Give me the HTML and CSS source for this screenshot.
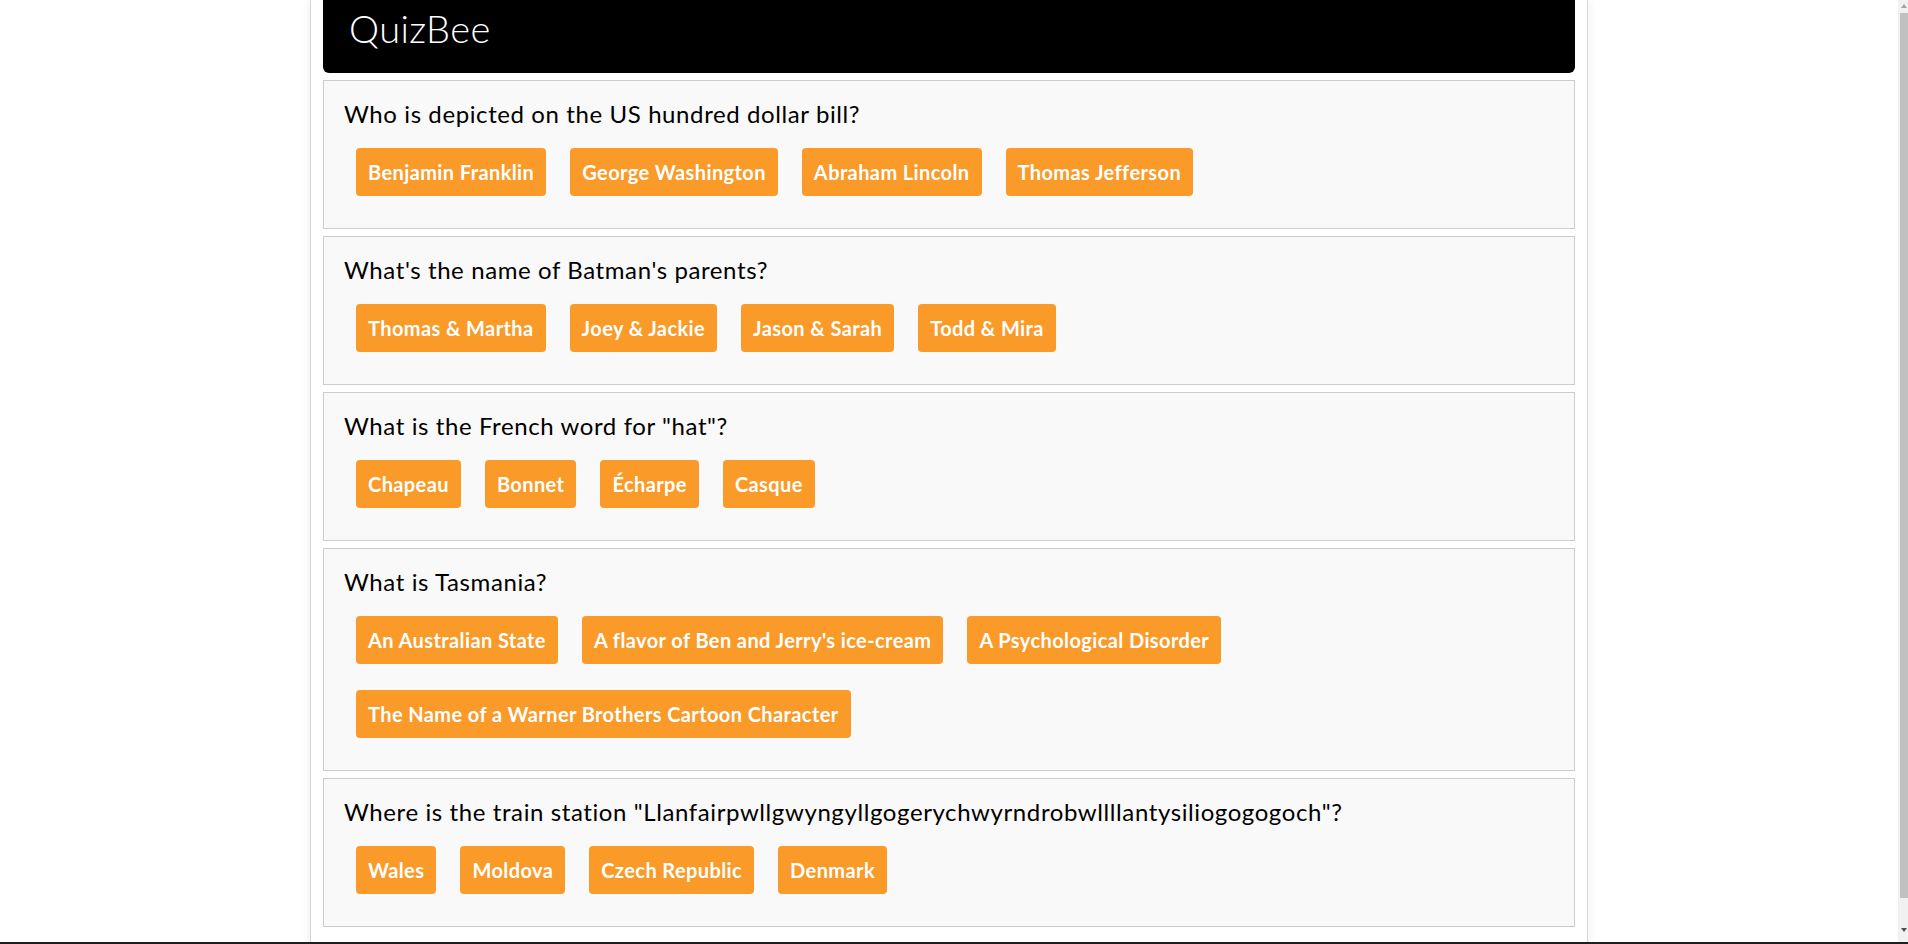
FILE: index.html
```html
<!DOCTYPE html>
<html lang="en">
<head>
<meta charset="utf-8">
<title>QuizBee</title>
<link rel="stylesheet" href="styles.css">
</head>
<body>
<div class="container">
  <header class="title-bar">QuizBee</header>

  <section class="card">
    <div class="question">Who is depicted on the US hundred dollar bill?</div>
    <div class="answers">
      <button class="answer">Benjamin Franklin</button>
      <button class="answer">George Washington</button>
      <button class="answer">Abraham Lincoln</button>
      <button class="answer">Thomas Jefferson</button>
    </div>
  </section>

  <section class="card">
    <div class="question">What's the name of Batman's parents?</div>
    <div class="answers">
      <button class="answer">Thomas &amp; Martha</button>
      <button class="answer">Joey &amp; Jackie</button>
      <button class="answer">Jason &amp; Sarah</button>
      <button class="answer">Todd &amp; Mira</button>
    </div>
  </section>

  <section class="card">
    <div class="question">What is the French word for "hat"?</div>
    <div class="answers">
      <button class="answer">Chapeau</button>
      <button class="answer">Bonnet</button>
      <button class="answer">Écharpe</button>
      <button class="answer">Casque</button>
    </div>
  </section>

  <section class="card">
    <div class="question">What is Tasmania?</div>
    <div class="answers">
      <button class="answer">An Australian State</button>
      <button class="answer">A flavor of Ben and Jerry's ice-cream</button>
      <button class="answer">A Psychological Disorder</button>
      <button class="answer">The Name of a Warner Brothers Cartoon Character</button>
    </div>
  </section>

  <section class="card">
    <div class="question">Where is the train station "Llanfairpwllgwyngyllgogerychwyrndrobwllllantysiliogogogoch"?</div>
    <div class="answers">
      <button class="answer">Wales</button>
      <button class="answer">Moldova</button>
      <button class="answer">Czech Republic</button>
      <button class="answer">Denmark</button>
    </div>
  </section>
</div>

<div class="scrollbar">
  <span class="scroll-arrow up"></span>
  <div class="scroll-thumb"></div>
  <span class="scroll-arrow down"></span>
</div>
<div class="taskbar"></div>
</body>
</html>
```

FILE: styles.css
```css
html, body {
  overflow: hidden;
}

body {
  margin: 0;
  padding-right: 10px;
  background: #ffffff;
  font-family: Lato, "Open Sans", sans-serif;
  color: #000;
}

.container {
  box-sizing: border-box;
  width: 1278px;
  margin: 0 auto;
  padding: 0 12px 60px;
  background: #fff;
  border-left: 1px solid #d8d8d8;
  border-right: 1px solid #d8d8d8;
  box-shadow: 0 0 10px rgba(0, 0, 0, 0.07);
}

.title-bar {
  height: 73px;
  box-sizing: border-box;
  background: #000;
  color: #fff;
  border-radius: 0 0 6px 6px;
  padding-left: 26px;
  font-size: 38px;
  font-weight: 300;
  letter-spacing: 0.4px;
  line-height: 56px;
}

.card {
  margin-top: 7px;
  background: #f9f9f9;
  border: 1px solid #cccccc;
  padding: 20px;
}

.question {
  font-size: 24px;
  letter-spacing: 0.6px;
  line-height: 25px;
  margin-bottom: 22px;
}

.answers {
  display: flex;
  flex-wrap: wrap;
  gap: 26px 24px;
  padding: 0 12px;
  margin-bottom: 12px;
}

.answer {
  font-family: Lato, "Open Sans", sans-serif;
  font-size: 20px;
  font-weight: 700;
  letter-spacing: 0.4px;
  color: #fff;
  background: #f99a29;
  border: none;
  border-radius: 4px;
  height: 48px;
  padding: 0 12px;
  line-height: 48px;
}

/* window chrome drawn over the page */
.scrollbar {
  position: fixed;
  top: 0;
  right: 0;
  bottom: 0;
  width: 10px;
  background: #f1f1f1;
  display: flex;
  flex-direction: column;
  align-items: flex-end;
}

.scroll-thumb {
  width: 8px;
  flex: 1;
  margin: 0 0 30px;
  background: #c1c1c1;
}

.scroll-arrow {
  display: block;
  width: 0;
  height: 0;
  margin: 4px 1px 5px 0;
  border-left: 3px solid transparent;
  border-right: 3px solid transparent;
}

.scroll-arrow.up {
  border-bottom: 4px solid #a3a3a3;
  margin-bottom: 5px;
}

.scroll-arrow.down {
  border-top: 4px solid #505050;
  margin: 0 1px 12px 0;
}

.taskbar {
  position: fixed;
  left: 0;
  right: 0;
  bottom: 0;
  height: 2px;
  background: #1f1f1f;
}
```
